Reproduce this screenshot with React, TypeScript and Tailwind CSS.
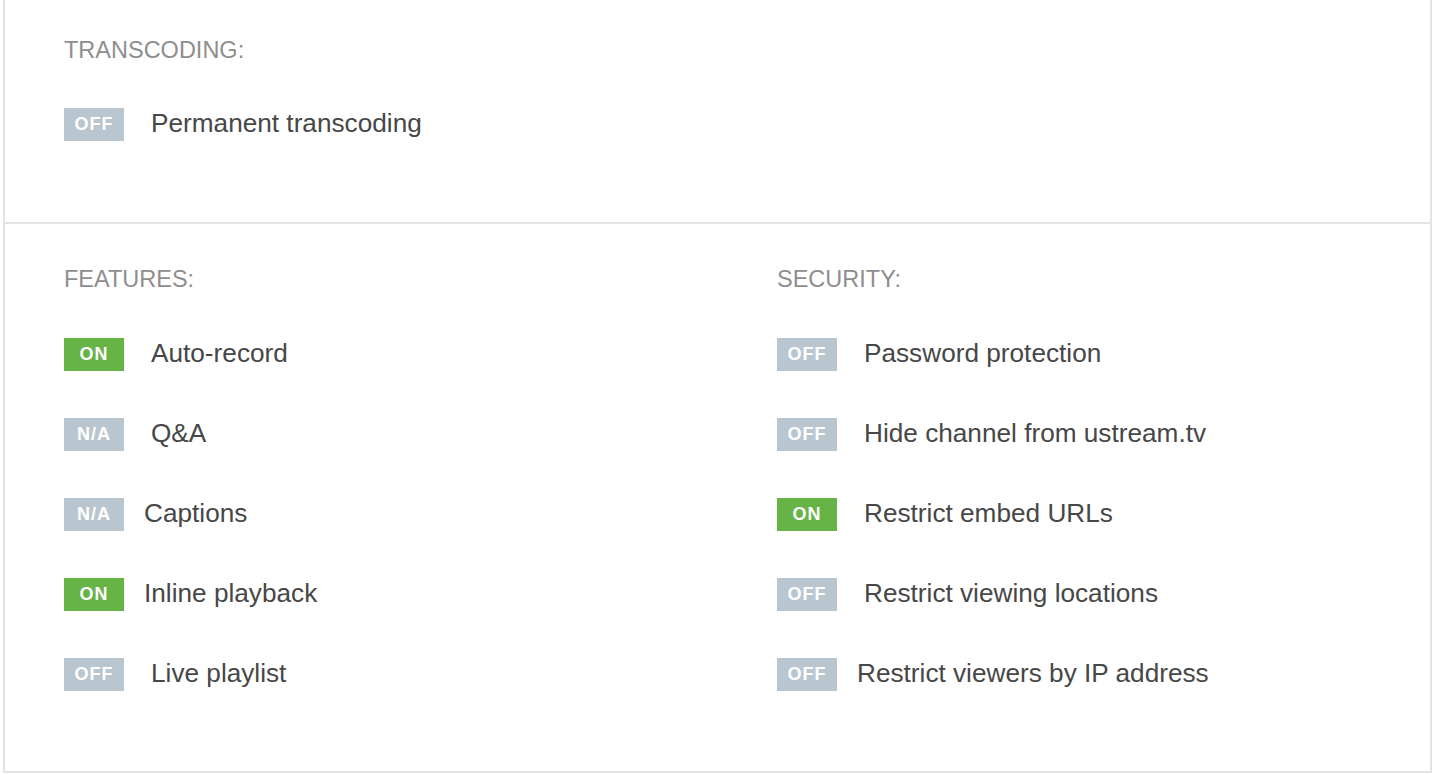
type Status = "on" | "off" | "na";

type Item = { status: Status; label: string; tight?: boolean };

const features: Item[] = [
  { status: "on", label: "Auto-record" },
  { status: "na", label: "Q&A" },
  { status: "na", label: "Captions", tight: true },
  { status: "on", label: "Inline playback", tight: true },
  { status: "off", label: "Live playlist" },
];

const security: Item[] = [
  { status: "off", label: "Password protection" },
  { status: "off", label: "Hide channel from ustream.tv" },
  { status: "on", label: "Restrict embed URLs" },
  { status: "off", label: "Restrict viewing locations" },
  { status: "off", label: "Restrict viewers by IP address", tight: true },
];

function Badge({ status }: { status: Status }) {
  const text = status === "on" ? "ON" : status === "off" ? "OFF" : "N/A";
  return (
    <span
      className={
        "flex h-[33px] w-[60px] shrink-0 items-center justify-center text-[18px] font-bold leading-[33px] tracking-[1px] text-white " +
        (status === "on" ? "bg-[#66b445]" : "bg-[#bac6cf]")
      }
    >
      {text}
    </span>
  );
}

function Row({ item }: { item: Item }) {
  return (
    <div className="flex h-[33px] items-start">
      <Badge status={item.status} />
      <span
        className={
          "text-[26.2px] leading-[30px] text-[#474747] " +
          (item.tight ? "ml-[20px]" : "ml-[27px]")
        }
      >
        {item.label}
      </span>
    </div>
  );
}

function Heading({ children }: { children: string }) {
  return (
    <h3 className="text-[23.5px] leading-[23px] text-[#8e8e8e]">{children}</h3>
  );
}

function Column({ title, items }: { title: string; items: Item[] }) {
  return (
    <div className="flex w-[713px] shrink-0 flex-col">
      <Heading>{title}</Heading>
      <div className="mt-[47px] flex flex-col gap-[47px]">
        {items.map((it) => (
          <Row key={it.label} item={it} />
        ))}
      </div>
    </div>
  );
}

export default function App() {
  return (
    <div
      className="min-h-screen bg-white"
      style={{ fontFamily: '"Liberation Sans", Arial, sans-serif' }}
    >
      <div className="ml-[3px] w-[1429px] overflow-hidden border-x-2 border-b-2 border-[#e3e3e3]">
        {/* Transcoding */}
        <section className="h-[222px] pl-[59px] pt-[39px]">
          <Heading>TRANSCODING:</Heading>
          <div className="mt-[46px]">
            <Row item={{ status: "off", label: "Permanent transcoding" }} />
          </div>
        </section>

        {/* Features / security */}
        <section className="flex h-[549px] border-t-2 border-[#e3e3e3] pl-[59px] pt-[44px]">
          <Column title="FEATURES:" items={features} />
          <div className="w-[600px] shrink-0">
            <Column title="SECURITY:" items={security} />
          </div>
        </section>
      </div>
    </div>
  );
}
